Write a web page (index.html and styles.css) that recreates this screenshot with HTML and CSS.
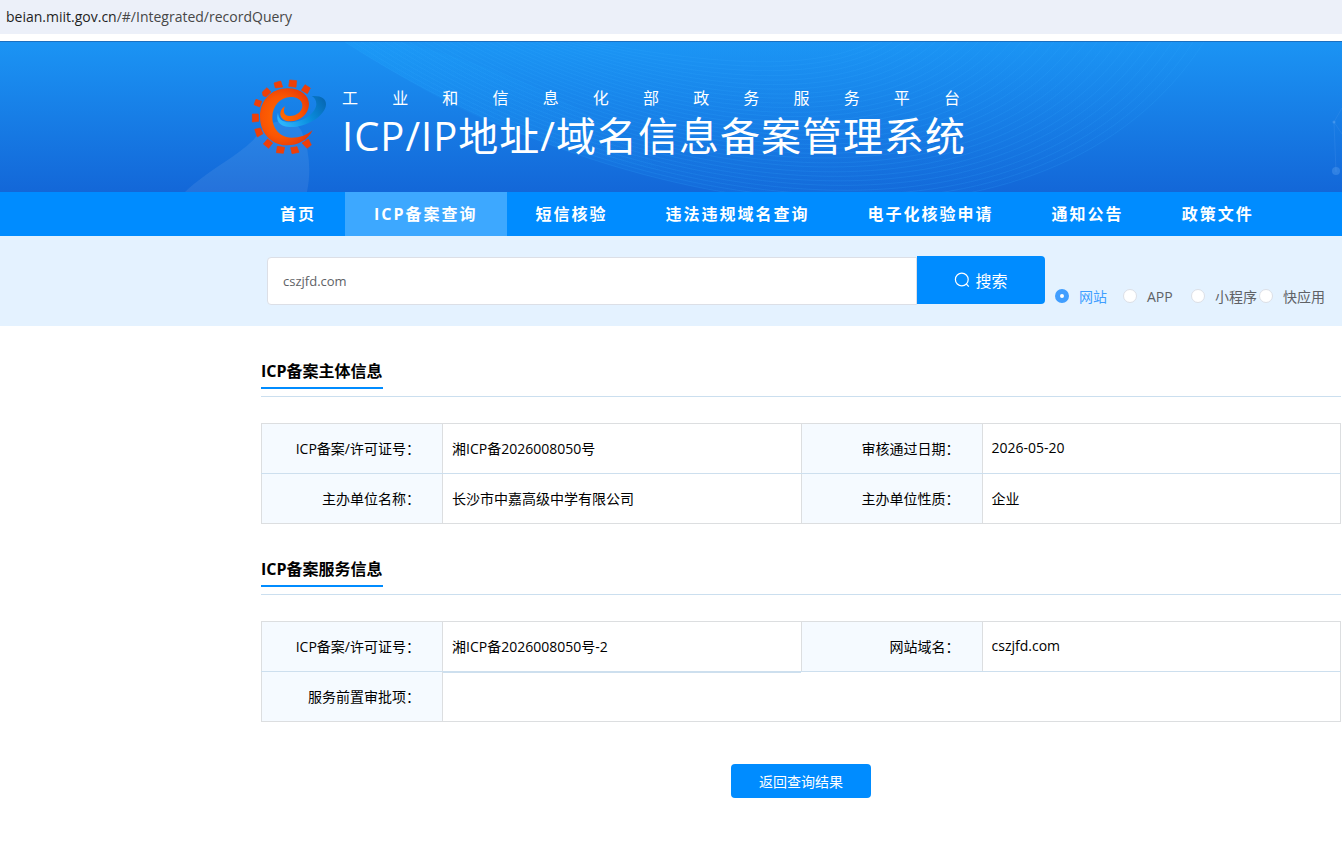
FILE: index.html
```html
<!DOCTYPE html>
<html lang="zh-CN">
<head>
  <meta charset="UTF-8">
  <meta name="viewport" content="width=device-width, initial-scale=1.0">
  <title>ICP/IP地址/域名信息备案管理系统</title>
  <link rel="stylesheet" href="styles.css">
</head>
<body>

  <div class="address-bar">beian.miit.gov.cn<span class="path">/#/Integrated/recordQuery</span></div>

  <header class="banner">
    <svg class="banner-bg" viewBox="0 0 1342 150" preserveAspectRatio="xMidYMid slice" aria-hidden="true">
      <defs>
        <linearGradient id="fan" x1="0" y1="0" x2="1" y2="0">
          <stop offset="0" stop-color="#1ea8ff" stop-opacity="0.3"/>
          <stop offset="1" stop-color="#1ea8ff" stop-opacity="0.04"/>
        </linearGradient>
      </defs>
      <path d="M185 150 C210 126 246 110 258 92 C272 74 296 76 302 90 C310 110 311 130 307 150 Z" fill="#fff" opacity="0.08"/>
      <path d="M345 0 C440 60 520 106 660 128 C600 70 520 30 400 0 Z" fill="url(#fan)" opacity="0.6"/>
      <path d="M345 0 C640 190 1050 240 1204 0 Z" fill="url(#fan)" opacity="0.4"/>
      <g id="waves" fill="none" stroke="#35adff" stroke-opacity="0.17"></g>
      <g fill="#6fb0f5" stroke="#6fb0f5">
        <path d="M1342 66 L1334 80 L1342 92 M1334 80 L1336 130" fill="none" opacity="0.15"/>
        <circle cx="1334" cy="80" r="1.5" stroke="none" opacity="0.4"/>
        <circle cx="1336" cy="129" r="4" stroke="none" opacity="0.3"/>
      </g>
    </svg>

    <svg class="logo" viewBox="30 27 228 228" aria-hidden="true">
      <defs>
        <radialGradient id="orange" cx="0.4" cy="0.5" r="0.6">
          <stop offset="0" stop-color="#ff6a00"/>
          <stop offset="0.6" stop-color="#fa5503"/>
          <stop offset="1" stop-color="#e63a08"/>
        </radialGradient>
        <linearGradient id="blue" x1="0" y1="0.6" x2="1" y2="0.2">
          <stop offset="0" stop-color="#2cb4fb"/>
          <stop offset="0.5" stop-color="#0a8fe0"/>
          <stop offset="1" stop-color="#0668b4"/>
        </linearGradient>
      </defs>
      <path fill="#ee3f08" stroke="#ee3f08" stroke-width="2" d="M99 39 L119 33 L125 51 L103 54 Z M146 30 L167 32 L165 52 L143 49 Z M192 44 L208 54 L199 71 L181 61 Z M64 66 L78 53 L90 66 L75 80 L66 77 Z M45 88 L62 94 L56 111 L39 104 Z M34 132 L52 132 L53 154 L34 156 Z M41 178 L58 174 L66 191 L49 201 Z M80 207 L95 219 L83 235 L67 222 Z M109 229 L131 232 L127 250 L106 248 Z M149 233 L168 230 L174 247 L153 251 Z M183 219 L202 207 L211 225 L198 235 Z"/>
      <path fill="url(#blue)" d="M212 78 C240 76 256 86 255 104 C252 140 190 174 145 171 C112 168 104 150 111 128 C112 146 122 156 145 157 C190 156 225 128 226 102 C226 90 220 82 212 78 Z"/>
      <path fill="url(#orange)" d="M215 180 C200 212 168 227 135 226 C88 224 57 186 57 140 C57 92 90 55 140 55 C180 55 204 78 204 102 C204 132 176 154 148 154 C128 154 116 142 118 128 C120 118 126 112 132 109 C126 122 127 138 146 138 C168 138 186 122 184 104 C182 88 164 80 148 81 C118 82 94 108 94 142 C94 176 118 203 152 203 C178 203 198 195 215 180 Z"/>
    </svg>

    <div class="banner-text">
      <p class="platform">工业和信息化部政务服务平台</p>
      <h1>ICP/IP地址/域名信息备案管理系统</h1>
    </div>
  </header>

  <nav class="menu">
    <a href="#">首页</a>
    <a href="#" class="active">ICP备案查询</a>
    <a href="#">短信核验</a>
    <a href="#">违法违规域名查询</a>
    <a href="#">电子化核验申请</a>
    <a href="#">通知公告</a>
    <a href="#">政策文件</a>
  </nav>

  <form class="search" onsubmit="return false">
    <input type="text" class="search-input" value="cszjfd.com" aria-label="查询内容">
    <button type="submit" class="search-btn">
      <svg width="16" height="16" viewBox="0 0 16 16" fill="none" stroke="#fff" stroke-width="1.2" aria-hidden="true">
        <circle cx="7.8" cy="7.5" r="6.4"/>
        <path d="M12.3 12 L14.8 14.6"/>
      </svg>
      搜索
    </button>
    <div class="types">
      <label><input type="radio" name="type" checked><span>网站</span></label>
      <label><input type="radio" name="type"><span>APP</span></label>
      <label><input type="radio" name="type"><span>小程序</span></label>
      <label><input type="radio" name="type"><span>快应用</span></label>
    </div>
  </form>

  <main class="content">
    <section>
      <h2><span>ICP备案主体信息</span></h2>
      <table>
        <colgroup><col class="col-label"><col><col class="col-label"><col></colgroup>
        <tr>
          <th scope="row">ICP备案/许可证号：</th>
          <td>湘ICP备2026008050号</td>
          <th scope="row">审核通过日期：</th>
          <td>2026-05-20</td>
        </tr>
        <tr>
          <th scope="row">主办单位名称：</th>
          <td>长沙市中嘉高级中学有限公司</td>
          <th scope="row">主办单位性质：</th>
          <td>企业</td>
        </tr>
      </table>
    </section>

    <section>
      <h2><span>ICP备案服务信息</span></h2>
      <table>
        <colgroup><col class="col-label"><col><col class="col-label"><col></colgroup>
        <tr>
          <th scope="row">ICP备案/许可证号：</th>
          <td class="marked">湘ICP备2026008050号-2</td>
          <th scope="row">网站域名：</th>
          <td>cszjfd.com</td>
        </tr>
        <tr>
          <th scope="row">服务前置审批项：</th>
          <td colspan="3"></td>
        </tr>
      </table>
    </section>

    <button type="button" class="back-btn">返回查询结果</button>
  </main>

  <script>
    // wave lines of the banner, blended from the outer curve to the inner one
    const outer = [345, 0, 640, 190, 1050, 240, 1204, 0];
    const inner = [600, 0, 700, 15, 800, 25, 860, 0];
    const count = 32;
    let waves = '';

    for (let i = 0; i < count; i++) {
      const p = outer.map((v, k) => Math.round(v + (inner[k] - v) * i / count));
      waves += `<path d="M${p[0]} ${p[1]} C${p[2]} ${p[3]} ${p[4]} ${p[5]} ${p[6]} ${p[7]}"/>`;
    }
    document.getElementById('waves').innerHTML = waves;
  </script>

</body>
</html>
```
FILE: styles.css
```css
* {
  box-sizing: border-box;
}

body {
  margin: 0;
  font-family: "Open Sans", "Noto Sans CJK SC", sans-serif;
  font-size: 14px;
  color: #000;
  background-color: #fff;
}

input,
button {
  font-family: inherit;
}

.address-bar {
  height: 34px;
  padding-left: 6px;
  line-height: 34px;
  background-color: #ecf0f9;
  color: #1f1f1f;
}

.address-bar .path {
  color: #474747;
}

.banner {
  position: relative;
  display: flex;
  align-items: flex-start;
  gap: 15px;
  height: 151px;
  margin-top: 7px;
  padding: 37px 0 0 251px;
  border-top: 1px solid #1b6fc0;
  background: linear-gradient(#1b94f4, #1367d8);
  color: #fff;
}

.banner-bg {
  position: absolute;
  top: 0;
  left: 0;
  width: 100%;
  height: 100%;
}

.logo {
  position: relative;
  width: 76px;
  height: 76px;
}

.banner-text {
  position: relative;
  width: 618px;
  padding-top: 7px;
}

.platform {
  margin: 0;
  font-size: 16px;
  line-height: 24px;
  text-align-last: justify;
}

h1 {
  margin: 0;
  font-size: 40px;
  font-weight: 400;
  line-height: 52px;
  letter-spacing: 1px;
  white-space: nowrap;
}

.menu {
  display: flex;
  padding-left: 251px;
  background-color: #008cff;
}

.menu a {
  padding: 0 29px;
  color: #fff;
  font-size: 16px;
  font-weight: 700;
  line-height: 44px;
  letter-spacing: 2px;
  text-decoration: none;
  white-space: nowrap;
}

.menu a.active {
  background-color: #3da8ff;
}

.search {
  display: flex;
  align-items: flex-start;
  height: 90px;
  padding: 20px 15px 0 267px;
  background-color: #e4f2ff;
}

.search-input {
  flex: 1;
  min-width: 0;
  height: 48px;
  margin-top: 1px;
  padding: 0 15px;
  border: 1px solid #dcdfe6;
  border-radius: 4px 0 0 4px;
  background-color: #fff;
  color: #606266;
  font-size: 13px;
}

.search-btn {
  display: flex;
  align-items: center;
  justify-content: center;
  gap: 5px;
  width: 128px;
  height: 48px;
  padding: 0;
  border: none;
  border-radius: 0 4px 4px 0;
  background-color: #008cff;
  color: #fff;
  font-size: 16px;
  cursor: pointer;
}

.types {
  display: grid;
  grid-template-columns: repeat(4, 68px);
  margin: 30px 0 0 10px;
  color: #606266;
}

.types label {
  display: flex;
  align-items: center;
  gap: 10px;
  height: 20px;
  white-space: nowrap;
}

.types input {
  appearance: none;
  flex: none;
  width: 14px;
  height: 14px;
  margin: 0;
  border: 1px solid #dcdfe6;
  border-radius: 50%;
  background-color: #fff;
}

.types input:checked {
  border: 5px solid #409eff;
}

.types input:checked + span {
  color: #409eff;
}

.content {
  padding: 32px 1px 45px 261px;
}

h2 {
  margin: 0 0 26px;
  padding-bottom: 7px;
  border-bottom: 1px solid #cbdfef;
  font-size: 16px;
  line-height: 26px;
}

h2 span {
  display: inline-block;
  padding-bottom: 3px;
  border-bottom: 2px solid #008cff;
}

section {
  margin-bottom: 32px;
}

table {
  width: 100%;
  table-layout: fixed;
  border-collapse: collapse;
}

.col-label {
  width: 181px;
}

th,
td {
  height: 50px;
  padding: 0 9px 2px;
  border: 1px solid #dcdee0;
  text-align: left;
}

th {
  padding-right: 22px;
  background-color: #f5faff;
  font-weight: 400;
  text-align: right;
}

tr:first-child th,
tr:first-child td {
  border-bottom-color: #cddfee;
}

/* cell with a heavier rule under it */
td.marked {
  box-shadow: 0 1px 0 #cddfee;
}

.back-btn {
  display: block;
  width: 140px;
  height: 34px;
  margin: 42px auto 0;
  padding: 0;
  border: none;
  border-radius: 4px;
  background-color: #008cff;
  color: #fff;
  font-size: 14px;
  cursor: pointer;
}
```
